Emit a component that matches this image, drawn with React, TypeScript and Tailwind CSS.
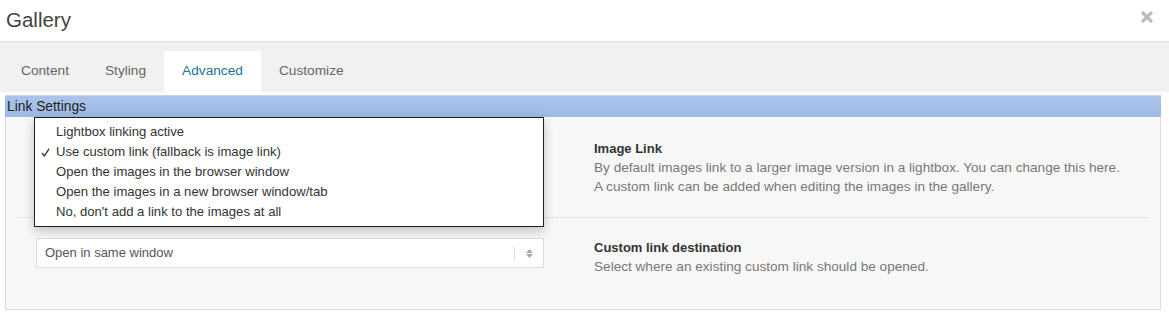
import React from "react"

const tabs = ["Content", "Styling", "Advanced", "Customize"]

const linkOptions = [
  "Lightbox linking active",
  "Use custom link (fallback is image link)",
  "Open the images in the browser window",
  "Open the images in a new browser window/tab",
  "No, don't add a link to the images at all",
]

function SelectBox({ value }: { value: string }) {
  return (
    <div className="w-[508px] h-[30px] bg-white border border-[#dddddd] flex items-center">
      <span className="flex-1 pl-[8px] text-[13px] text-[#555555]">{value}</span>
      <span className="w-px h-[15px] bg-[#e2e2e2]" />
      <span className="w-[28px] flex flex-col items-center justify-center gap-[1px]">
        <svg width="7" height="4" viewBox="0 0 7 4">
          <path d="M0 4 L3.5 0 L7 4 Z" fill="#aaaaaa" />
        </svg>
        <svg width="7" height="4" viewBox="0 0 7 4">
          <path d="M0 0 L3.5 4 L7 0 Z" fill="#aaaaaa" />
        </svg>
      </span>
    </div>
  )
}

export default function App() {
  const active = "Advanced"

  return (
    <div className="w-[1169px] h-[317px] bg-white overflow-hidden font-['Liberation_Sans',Arial,sans-serif]">
      {/* title bar */}
      <div className="h-[42px] border-b border-[#dddddd] flex items-start justify-between pl-[6px] pr-[16px]">
        <h1 className="text-[20.5px] leading-[40px] text-[#444444]">Gallery</h1>
        <svg className="mt-[11px]" width="12" height="12" viewBox="0 0 12 12">
          <path d="M2 2 L10 10 M10 2 L2 10" stroke="#bbbbbb" strokeWidth="3.2" strokeLinecap="round" />
        </svg>
      </div>

      {/* tabs */}
      <div className="h-[50px] bg-[#f1f1f1] flex items-end pl-[3px]">
        {tabs.map((t) => (
          <div
            key={t}
            className={`h-[41px] px-[18px] flex items-center text-[13.7px] ${
              t === active ? "bg-white text-[#21759b]" : "text-[#666666]"
            }`}
          >
            {t}
          </div>
        ))}
      </div>

      {/* content */}
      <div className="pt-[3px] pl-[5px]">
        <div className="w-[1156px]">
          <div className="h-[22px] bg-linear-to-b from-[#aac4eb] to-[#9db9e4] border-t border-[#c4d4ee] flex items-center pt-[1px] pl-[2px] text-[13.8px] text-[#222222]">
            Link Settings
          </div>

          <div className="bg-[#f7f7f7] border-x border-b border-[#dddddd] px-[11px]">
            {/* row 1 */}
            <div className="relative flex gap-[50px] pl-[19px] pt-[22px] pb-[21px] border-b border-dotted border-[#d6d6d6]">
              {/* select sits under the open menu */}
              <SelectBox value="" />
              <div className="leading-[19px]">
                <div className="text-[13px] font-bold text-[#333333]">Image Link</div>
                <div className="text-[13.6px] text-[#777777]">
                  By default images link to a larger image version in a lightbox. You can change this here.
                </div>
                <div className="text-[13.6px] text-[#777777]">
                  A custom link can be added when editing the images in the gallery.
                </div>
              </div>

              {/* open native menu */}
              <div className="absolute left-[17px] top-0 w-[510px] h-[110px] bg-white border border-[#1f1f1f] shadow-[0_4px_10px_rgba(0,0,0,0.22)] py-[4px] z-10">
                {linkOptions.map((o, i) => (
                  <div key={o} className="h-[20px] flex items-center text-[13.1px] text-[#333333]">
                    <span className="w-[21px] pl-[6px] flex items-center">
                      {i === 1 && (
                        <svg width="9" height="9" viewBox="0 0 9 9">
                          <path d="M1 5 L3.4 8 L8 0.8" fill="none" stroke="#333333" strokeWidth="1.3" />
                        </svg>
                      )}
                    </span>
                    <span>{o}</span>
                  </div>
                ))}
              </div>
            </div>

            {/* row 2 */}
            <div className="flex gap-[50px] pl-[19px] pt-[20px] pb-[33px]">
              <SelectBox value="Open in same window" />
              <div className="leading-[19px]">
                <div className="text-[13px] font-bold text-[#333333]">Custom link destination</div>
                <div className="text-[13.6px] text-[#777777]">
                  Select where an existing custom link should be opened.
                </div>
              </div>
            </div>
          </div>
        </div>
      </div>
    </div>
  )
}
